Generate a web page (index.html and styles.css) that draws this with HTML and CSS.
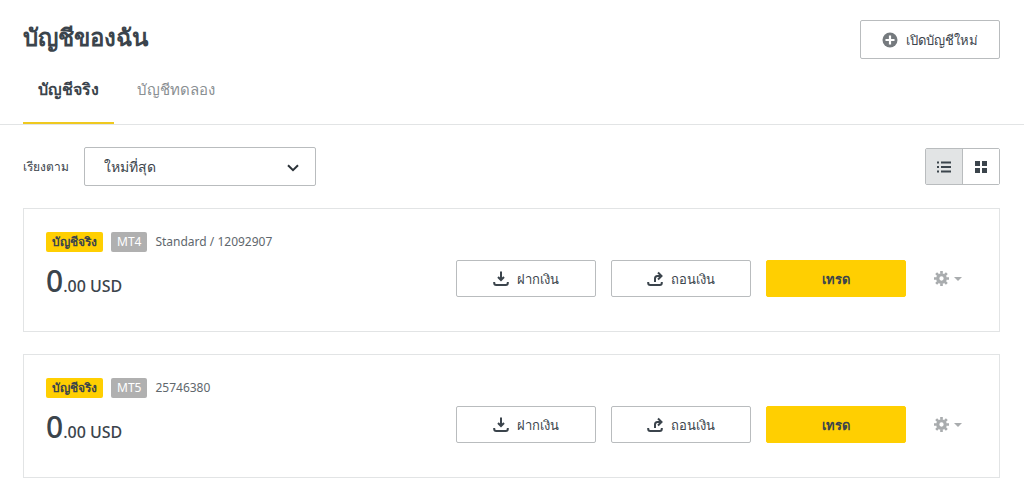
FILE: index.html
```
<!DOCTYPE html>
<html lang="th">
    <head>
        <meta charset="UTF-8">
        <meta name="viewport" content="width=device-width, initial-scale=1" />

        <title>บัญชีของฉัน</title>

        <link rel="stylesheet" href="styles.css">
    </head>

    <body>
        <!-- shared icons -->
        <svg class="sprite" aria-hidden="true">
            <symbol id="iconDeposit" viewBox="0 0 16 16">
                <path d="M8 .5v8M5 6l3 3 3-3M1.200 11v1a2 2 0 0 0 2 2h9.600a2 2 0 0 0 2-2v-1" fill="none" stroke="currentColor" stroke-width="2" />
            </symbol>
            <symbol id="iconWithdraw" viewBox="0 0 16 16">
                <path d="M8 11V7.500a2.500 2.500 0 0 1 2.500-2.500h3.500M11 1.500l3.500 3.500-3.500 3.500M1.200 11v1a2 2 0 0 0 2 2h9.600a2 2 0 0 0 2-2v-1" fill="none" stroke="currentColor" stroke-width="2" />
            </symbol>
            <symbol id="iconGear" viewBox="0 0 16 16">
                <circle cx="8" cy="8" r="4" fill="none" stroke="currentColor" stroke-width="3.400" />
                <path d="M8 0v3M8 13v3M0 8h3M13 8h3M2.300 2.300l2.200 2.200M11.500 11.500l2.200 2.200M2.300 13.700l2.200-2.200M11.500 4.500l2.200-2.200" stroke="currentColor" stroke-width="2.800" />
            </symbol>
        </svg>

        <header class="header">
            <h1 class="heading">บัญชีของฉัน</h1>
            <button type="button" class="button open">
                <svg class="icon" viewBox="0 0 16 16" aria-hidden="true">
                    <circle cx="8" cy="8" r="7.500" fill="#757a7e" />
                    <path d="M8 3.500v9M3.500 8h9" stroke="#fff" stroke-width="2.200" />
                </svg>
                เปิดบัญชีใหม่
            </button>
        </header>

        <nav class="tabs">
            <a class="tab active" href="#real">บัญชีจริง</a>
            <a class="tab" href="#demo">บัญชีทดลอง</a>
        </nav>

        <main class="content" id="real">
            <div class="toolbar">
                <label class="sortLabel" for="sortSelect">เรียงตาม</label>
                <div class="selectWrapper">
                    <select class="select" id="sortSelect" name="sortSelect">
                        <option value="newest" selected>ใหม่ที่สุด</option>
                    </select>
                    <svg class="chevron" viewBox="0 0 12 8" aria-hidden="true">
                        <path d="M1 1.200l5 5 5-5" fill="none" stroke="#2b3238" stroke-width="2" />
                    </svg>
                </div>
                <div class="viewToggle">
                    <button type="button" class="toggle selected" aria-label="รายการ" aria-pressed="true">
                        <svg class="viewIcon" viewBox="0 0 14 14" aria-hidden="true">
                            <path d="M0 2.500h2M4 2.500h10M0 7h2M4 7h10M0 11.500h2M4 11.500h10" stroke="currentColor" stroke-width="1.800" />
                        </svg>
                    </button>
                    <button type="button" class="toggle" aria-label="ตาราง" aria-pressed="false">
                        <svg class="viewIcon" viewBox="0 0 14 14" aria-hidden="true">
                            <path d="M1 1h5v5H1zM8 1h5v5H8zM1 8h5v5H1zM8 8h5v5H8z" fill="currentColor" />
                        </svg>
                    </button>
                </div>
            </div>

            <section class="account">
                <div class="info">
                    <div class="meta">
                        <span class="badge real">บัญชีจริง</span>
                        <span class="badge">MT4</span>
                        <span class="number">Standard / 12092907</span>
                    </div>
                    <div class="balance"><span class="whole">0</span>.00 USD</div>
                </div>
                <div class="actions">
                    <button type="button" class="button">
                        <svg class="icon" aria-hidden="true"><use href="#iconDeposit" /></svg>
                        ฝากเงิน
                    </button>
                    <button type="button" class="button">
                        <svg class="icon" aria-hidden="true"><use href="#iconWithdraw" /></svg>
                        ถอนเงิน
                    </button>
                    <button type="button" class="button primary">เทรด</button>
                    <button type="button" class="settings" aria-label="ตั้งค่า">
                        <svg class="gear" aria-hidden="true"><use href="#iconGear" /></svg>
                        <span class="caret"></span>
                    </button>
                </div>
            </section>

            <section class="account">
                <div class="info">
                    <div class="meta">
                        <span class="badge real">บัญชีจริง</span>
                        <span class="badge">MT5</span>
                        <span class="number">25746380</span>
                    </div>
                    <div class="balance"><span class="whole">0</span>.00 USD</div>
                </div>
                <div class="actions">
                    <button type="button" class="button">
                        <svg class="icon" aria-hidden="true"><use href="#iconDeposit" /></svg>
                        ฝากเงิน
                    </button>
                    <button type="button" class="button">
                        <svg class="icon" aria-hidden="true"><use href="#iconWithdraw" /></svg>
                        ถอนเงิน
                    </button>
                    <button type="button" class="button primary">เทรด</button>
                    <button type="button" class="settings" aria-label="ตั้งค่า">
                        <svg class="gear" aria-hidden="true"><use href="#iconGear" /></svg>
                        <span class="caret"></span>
                    </button>
                </div>
            </section>
        </main>
    </body>
</html>
```

FILE: styles.css
```
* {
    box-sizing: border-box;
}

body {
    font-family: "Noto Sans", sans-serif;
    font-size: 12px;
    line-height: 20px;
    color: #3b444c;
    background-color: #fff;
    margin: 0;
}

button, select {
    font: inherit;
    color: inherit;
    cursor: pointer;
}

.sprite {
    display: none;
}

.header {
    display: flex;
    justify-content: space-between;
    align-items: flex-start;
    padding: 20px 24px 0 23px;
}

.heading {
    font-size: 24px;
    line-height: 34px;
    font-weight: bold;
    margin: 0;
}

.button {
    display: flex;
    align-items: center;
    justify-content: center;
    gap: 8px;
    width: 140px;
    height: 37px;
    padding: 0;
    background-color: #fff;
    border: 1px solid #b9bcbe;
    border-radius: 2px;
    font-size: 13px;
    white-space: nowrap;
}

.open {
    height: 39px;
}

.primary {
    background-color: #ffcf01;
    border-color: #ffcf01;
    font-weight: bold;
}

.icon {
    width: 16px;
    height: 16px;
}

.tabs {
    display: flex;
    gap: 8px;
    padding: 0 23px;
    border-bottom: 1px solid #e2e4e5;
}

.tab {
    padding: 20px 15px 23px;
    border-bottom: 2px solid transparent;
    font-size: 15px;
    color: #8a8f93;
    text-decoration: none;
}

.tab.active {
    border-color: #efc91f;
    font-size: 16px;
    color: #3b444c;
    font-weight: bold;
}

.content {
    padding: 22px 24px 22px 23px;
}

.toolbar {
    display: flex;
    align-items: center;
    margin-bottom: 22px;
}

.sortLabel {
    margin-right: 15px;
}

.selectWrapper {
    position: relative;
    width: 232px;
}

.select {
    display: block;
    appearance: none;
    width: 100%;
    height: 39px;
    padding: 0 40px 0 19px;
    background-color: #fff;
    border: 1px solid #b9bcbe;
    border-radius: 2px;
    font-size: 14px;
}

/* sits over the select */
.chevron {
    position: absolute;
    top: 17px;
    right: 17px;
    width: 12px;
    height: 8px;
    pointer-events: none;
}

.viewToggle {
    display: flex;
    margin-left: auto;
    border: 1px solid #b9bcbe;
    border-radius: 2px;
}

.toggle {
    display: flex;
    align-items: center;
    justify-content: center;
    width: 36px;
    height: 35px;
    padding: 0;
    background-color: #fff;
    border: 0;
}

.toggle.selected {
    width: 37px;
    background-color: #e2e4e5;
    border-right: 1px solid #b9bcbe;
}

.viewIcon {
    width: 14px;
    height: 14px;
}

.account {
    display: flex;
    justify-content: space-between;
    align-items: flex-start;
    padding: 23px 37px 33px 22px;
    border: 1px solid #e2e4e5;
}

.account + .account {
    margin-top: 22px;
}

.meta {
    display: flex;
    align-items: center;
    gap: 8px;
}

.badge {
    padding: 0 6px;
    background-color: #b0b0b0;
    border-radius: 2px;
    color: #fff;
}

.badge.real {
    background-color: #ffcf01;
    color: #3b444c;
    font-weight: bold;
}

.number {
    color: #60676d;
}

.balance {
    margin-top: 17px;
    font-size: 16px;
    font-weight: 500;
    line-height: 24px;
}

.whole {
    font-size: 30px;
}

.actions {
    display: flex;
    align-items: center;
    gap: 15px;
    margin-top: 28px;
}

.settings {
    display: flex;
    align-items: center;
    gap: 5px;
    margin-left: 13px;
    padding: 0;
    background: none;
    border: 0;
    color: #a9acae;
}

.gear {
    width: 15px;
    height: 15px;
}

.caret {
    border: 4px solid transparent;
    border-top-color: #a9acae;
    border-bottom: 0;
}
```
